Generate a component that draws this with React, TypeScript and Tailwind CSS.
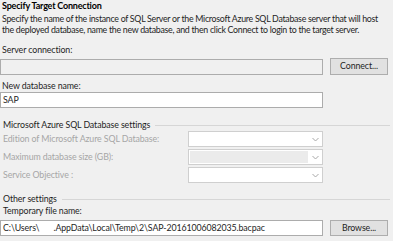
const font = { fontFamily: 'Lato, "Noto Sans", sans-serif' };

function Chevron() {
  return (
    <svg width="7" height="5" viewBox="0 0 7 5" className="text-[#a8a8a8]">
      <path d="M0.5 1l3 3 3-3" fill="none" stroke="currentColor" strokeWidth="1" />
    </svg>
  );
}

function Combo({ disabled }: { disabled?: boolean }) {
  return (
    <div className="flex h-[16px] w-[135px] shrink-0 items-center border border-[#cfcfcf] bg-white">
      <div className={disabled ? "ml-px h-[12px] flex-1 bg-[#ebebeb]" : "flex-1"} />
      <div className="flex w-[14px] justify-center">
        <Chevron />
      </div>
    </div>
  );
}

function Section({ title }: { title: string }) {
  return (
    <div className="flex h-[12px] items-center text-[#1e1e1e]">
      <span className="shrink-0 pl-[3px] leading-[12px]">{title}</span>
      <div className="ml-[5px] mr-[3px] h-px flex-1 bg-[#d6d6d6]" />
    </div>
  );
}

export default function App() {
  return (
    <div
      style={font}
      className="h-[241px] w-[393px] overflow-hidden whitespace-nowrap bg-[#f0f0f0] text-[8.8px] tracking-[-0.1px] text-[#1e1e1e]"
    >
      <div className="pl-[2px] text-[9px] font-bold leading-[12px] tracking-[-0.2px] text-black">
        Specify Target Connection
      </div>
      <p className="mt-px pl-[2px] leading-[11px] tracking-[-0.28px]">
        Specify the name of the instance of SQL Server or the Microsoft Azure SQL Database server that will host
        <br />
        the deployed database, name the new database, and then click Connect to login to the target server.
      </p>

      <div className="mt-[9px] pl-[2px] leading-[12px]">Server connection:</div>
      <div className="mt-[2px] flex items-start">
        <div className="mt-px h-[16px] w-[323px] border border-[#acacac] bg-[#f0f0f0]" />
        <button
          type="button"
          className="ml-[7px] flex h-[17px] w-[58px] items-center justify-center border border-[#adadad] bg-[#e1e1e1] leading-none"
        >
          Connect...
        </button>
      </div>

      <div className="mt-[5px] pl-[2px] leading-[12px]">New database name:</div>
      <div className="flex h-[16px] w-[323px] items-center border border-[#acacac] bg-white pl-[2px]">
        SAP
      </div>

      <div className="mt-[11px]">
        <Section title="Microsoft Azure SQL Database settings" />
      </div>
      <div className="flex flex-col gap-[2px] text-[#a6a6a6]">
        <div className="flex items-center">
          <span className="w-[188px] pl-[3px]">Edition of Microsoft Azure SQL Database:</span>
          <Combo />
        </div>
        <div className="flex items-center">
          <span className="w-[188px] pl-[3px]">Maximum database size (GB):</span>
          <Combo disabled />
        </div>
        <div className="flex items-center">
          <span className="w-[188px] pl-[3px]">Service Objective :</span>
          <Combo />
        </div>
      </div>

      <div className="mt-[10px]">
        <Section title="Other settings" />
      </div>
      <div className="pl-[3px] leading-[11px]">Temporary file name:</div>
      <div className="mt-[4px] flex items-center">
        <div className="flex h-[16px] w-[323px] items-center border border-[#acacac] bg-white pl-[2px]">
          C:\Users\<span className="w-[14px]" />.AppData\Local\Temp\2\SAP-20161006082035.bacpac
        </div>
        <button
          type="button"
          className="ml-[7px] flex h-[16px] w-[58px] items-center justify-center border border-[#adadad] bg-[#e1e1e1] leading-none"
        >
          Browse...
        </button>
      </div>
    </div>
  );
}
